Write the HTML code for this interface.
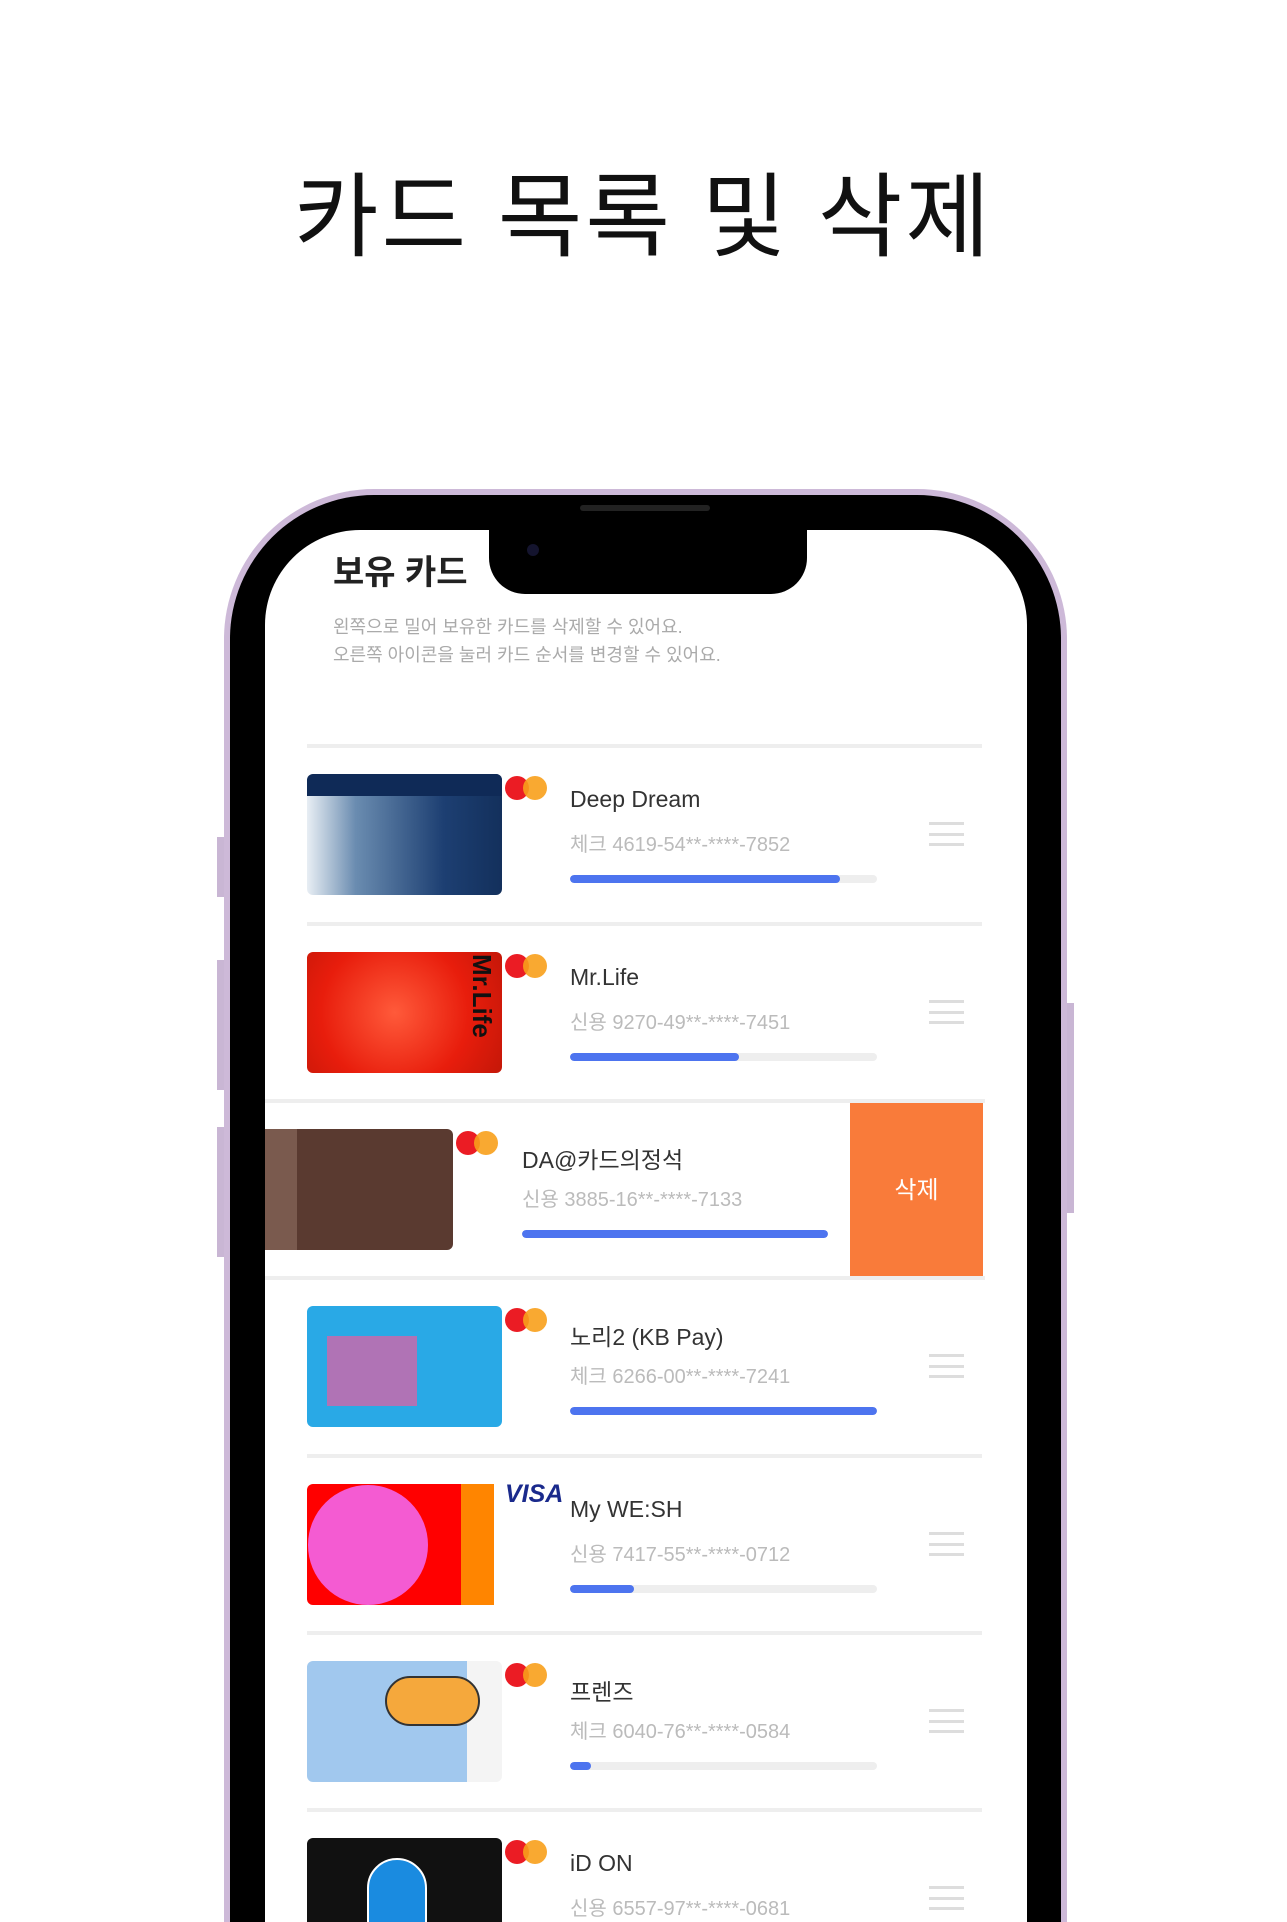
<!DOCTYPE html>
<html style="width:1287px;height:1922px;overflow:hidden"><head><meta charset="utf-8"><style>
*{margin:0;padding:0;box-sizing:border-box}
body{width:1287px;height:1922px;background:#fff;position:relative;overflow:hidden;font-family:"Liberation Sans","Noto Sans CJK KR",sans-serif}
.abs{position:absolute}
.title{left:0;width:1287px;top:143px;text-align:center;font-size:92px;font-weight:400;color:#111;letter-spacing:3px}
.frame{left:224px;top:489px;width:843px;height:1433px;border-radius:150px 150px 0 0;background:#cdb9d8;}
.bezel{left:230px;top:495px;width:831px;height:1427px;border-radius:144px 144px 0 0;background:#000}
.screen{left:265px;top:530px;width:762px;height:1392px;border-radius:95px 95px 0 0;background:#fff;overflow:hidden}
.notch{left:489px;top:520px;width:318px;height:74px;background:#000;border-radius:0 0 36px 36px}
.sep{left:42px;width:675px;height:4px;background:#eee}
.card{width:195px;height:121px;border-radius:6px;overflow:hidden}
.mc{width:48px;height:26px}
.mc i{position:absolute;top:0;width:24px;height:24px;border-radius:50%}
.name{font-size:23px;color:#333}
.num{font-size:20px;color:#bbb}
.bar{width:307px;height:8px;border-radius:4px;background:#eee;overflow:hidden}
.bar b{display:block;height:100%;background:#4d74ef;border-radius:4px}
.ham{width:35px;height:24px;border-top:3px solid #ddd;border-bottom:3px solid #ddd}
.ham:after{content:"";position:absolute;left:0;right:0;top:8px;height:3px;background:#ddd}
.btn{background:#c9b6d4;width:7px}
</style></head><body>
<div class="abs title">카드 목록 및 삭제</div>
<div class="abs btn" style="left:217px;top:837px;height:60px"></div>
<div class="abs btn" style="left:217px;top:960px;height:130px"></div>
<div class="abs btn" style="left:217px;top:1127px;height:130px"></div>
<div class="abs btn" style="left:1067px;top:1003px;height:210px"></div>
<div class="abs frame"></div>
<div class="abs bezel"></div>
<div class="abs screen">
 <div class="abs" style="left:68px;top:15px;font-size:34px;font-weight:bold;color:#222">보유 카드</div>
 <div class="abs" style="left:68px;top:83px;font-size:18px;color:#aaa;line-height:28px">왼쪽으로 밀어 보유한 카드를 삭제할 수 있어요.<br>오른쪽 아이콘을 눌러 카드 순서를 변경할 수 있어요.</div>

 <div class="abs sep" style="top:214px"></div>
 <div class="abs card" style="left:42px;top:244px;background:linear-gradient(90deg,#e8eef4 0%,#6a8cb0 25%,#1d3f72 70%,#13305c)"><div style="height:22px;background:#0f2a57"></div></div>
 <div class="abs mc" style="left:240px;top:246px"><i style="left:0;background:#eb1c24"></i><i style="left:18px;background:#f8a01b;opacity:.9"></i></div>
 <div class="abs name" style="left:305px;top:256px">Deep Dream</div>
 <div class="abs num" style="left:305px;top:298px">체크 4619-54**-****-7852</div>
 <div class="abs bar" style="left:305px;top:345px"><b style="width:88%"></b></div>
 <div class="abs ham" style="left:664px;top:292px"></div>

 <div class="abs sep" style="top:392px"></div>
 <div class="abs card" style="left:42px;top:422px;background:radial-gradient(circle at 45% 50%,#ff5a3a,#e81d0c 60%,#c41708)"></div>
 <div class="abs" style="left:192px;top:424px;width:40px;height:115px;color:#111;font-weight:bold;font-size:26px;writing-mode:vertical-rl">Mr.Life</div>
 <div class="abs mc" style="left:240px;top:424px"><i style="left:0;background:#eb1c24"></i><i style="left:18px;background:#f8a01b;opacity:.9"></i></div>
 <div class="abs name" style="left:305px;top:434px">Mr.Life</div>
 <div class="abs num" style="left:305px;top:476px">신용 9270-49**-****-7451</div>
 <div class="abs bar" style="left:305px;top:523px"><b style="width:55%"></b></div>
 <div class="abs ham" style="left:664px;top:470px"></div>

 <div class="abs sep" style="top:569px;left:0;width:720px"></div>
 <div class="abs card" style="left:-7px;top:599px;background:linear-gradient(90deg,#7a5a4e 0 20%,#5a3a30 20%)"></div>
 <div class="abs mc" style="left:191px;top:601px"><i style="left:0;background:#eb1c24"></i><i style="left:18px;background:#f8a01b;opacity:.9"></i></div>
 <div class="abs name" style="left:257px;top:611px">DA@카드의정석</div>
 <div class="abs num" style="left:257px;top:653px">신용 3885-16**-****-7133</div>
 <div class="abs bar" style="left:257px;top:700px;width:306px"><b style="width:100%"></b></div>
 <div class="abs" style="left:585px;top:573px;width:133px;height:176px;background:#f97b3a;color:#fff;font-size:24px;text-align:center;line-height:176px">삭제</div>
 <div class="abs sep" style="top:746px;left:0;width:720px"></div>

 <div class="abs card" style="left:42px;top:776px;background:#29a9e6"><div style="position:absolute;left:20px;top:30px;width:90px;height:70px;background:#e95ca0;opacity:.7"></div></div>
 <div class="abs mc" style="left:240px;top:778px"><i style="left:0;background:#eb1c24"></i><i style="left:18px;background:#f8a01b;opacity:.9"></i></div>
 <div class="abs name" style="left:305px;top:788px">노리2 (KB Pay)</div>
 <div class="abs num" style="left:305px;top:830px">체크 6266-00**-****-7241</div>
 <div class="abs bar" style="left:305px;top:877px"><b style="width:100%"></b></div>
 <div class="abs ham" style="left:664px;top:824px"></div>

 <div class="abs sep" style="top:924px"></div>
 <div class="abs card" style="left:42px;top:954px;background:linear-gradient(90deg,#f00 0 79%,#ff8500 79% 96%,#fff 96%)"><div style="position:absolute;left:1px;top:1px;width:120px;height:120px;border-radius:50%;background:#f45bd2"></div></div>
 <div class="abs" style="left:240px;top:950px;color:#1a2a8c;font-weight:bold;font-style:italic;font-size:25px">VISA</div>
 <div class="abs name" style="left:305px;top:966px">My WE:SH</div>
 <div class="abs num" style="left:305px;top:1008px">신용 7417-55**-****-0712</div>
 <div class="abs bar" style="left:305px;top:1055px"><b style="width:21%"></b></div>
 <div class="abs ham" style="left:664px;top:1002px"></div>

 <div class="abs sep" style="top:1101px"></div>
 <div class="abs card" style="left:42px;top:1131px;background:linear-gradient(90deg,#a1c8ee 0 82%,#f4f4f4 82%)"><div style="position:absolute;left:78px;top:15px;width:95px;height:50px;border-radius:25px;background:#f5a83c;border:2px solid #333"></div></div>
 <div class="abs mc" style="left:240px;top:1133px"><i style="left:0;background:#eb1c24"></i><i style="left:18px;background:#f8a01b;opacity:.9"></i></div>
 <div class="abs name" style="left:305px;top:1143px">프렌즈</div>
 <div class="abs num" style="left:305px;top:1185px">체크 6040-76**-****-0584</div>
 <div class="abs bar" style="left:305px;top:1232px"><b style="width:7%"></b></div>
 <div class="abs ham" style="left:664px;top:1179px"></div>

 <div class="abs sep" style="top:1278px"></div>
 <div class="abs card" style="left:42px;top:1308px;background:#111"><div style="position:absolute;left:60px;top:20px;width:60px;height:120px;border-radius:30px;background:#1a8be0;border:2px solid #fff"></div></div>
 <div class="abs mc" style="left:240px;top:1310px"><i style="left:0;background:#eb1c24"></i><i style="left:18px;background:#f8a01b;opacity:.9"></i></div>
 <div class="abs name" style="left:305px;top:1320px">iD ON</div>
 <div class="abs num" style="left:305px;top:1362px">신용 6557-97**-****-0681</div>
 <div class="abs ham" style="left:664px;top:1356px"></div>
</div>
<div class="abs notch"></div>
<div class="abs" style="left:580px;top:505px;width:130px;height:6px;border-radius:3px;background:#222"></div>
<div class="abs" style="left:527px;top:544px;width:12px;height:12px;border-radius:50%;background:#14142e"></div>
</body></html>
